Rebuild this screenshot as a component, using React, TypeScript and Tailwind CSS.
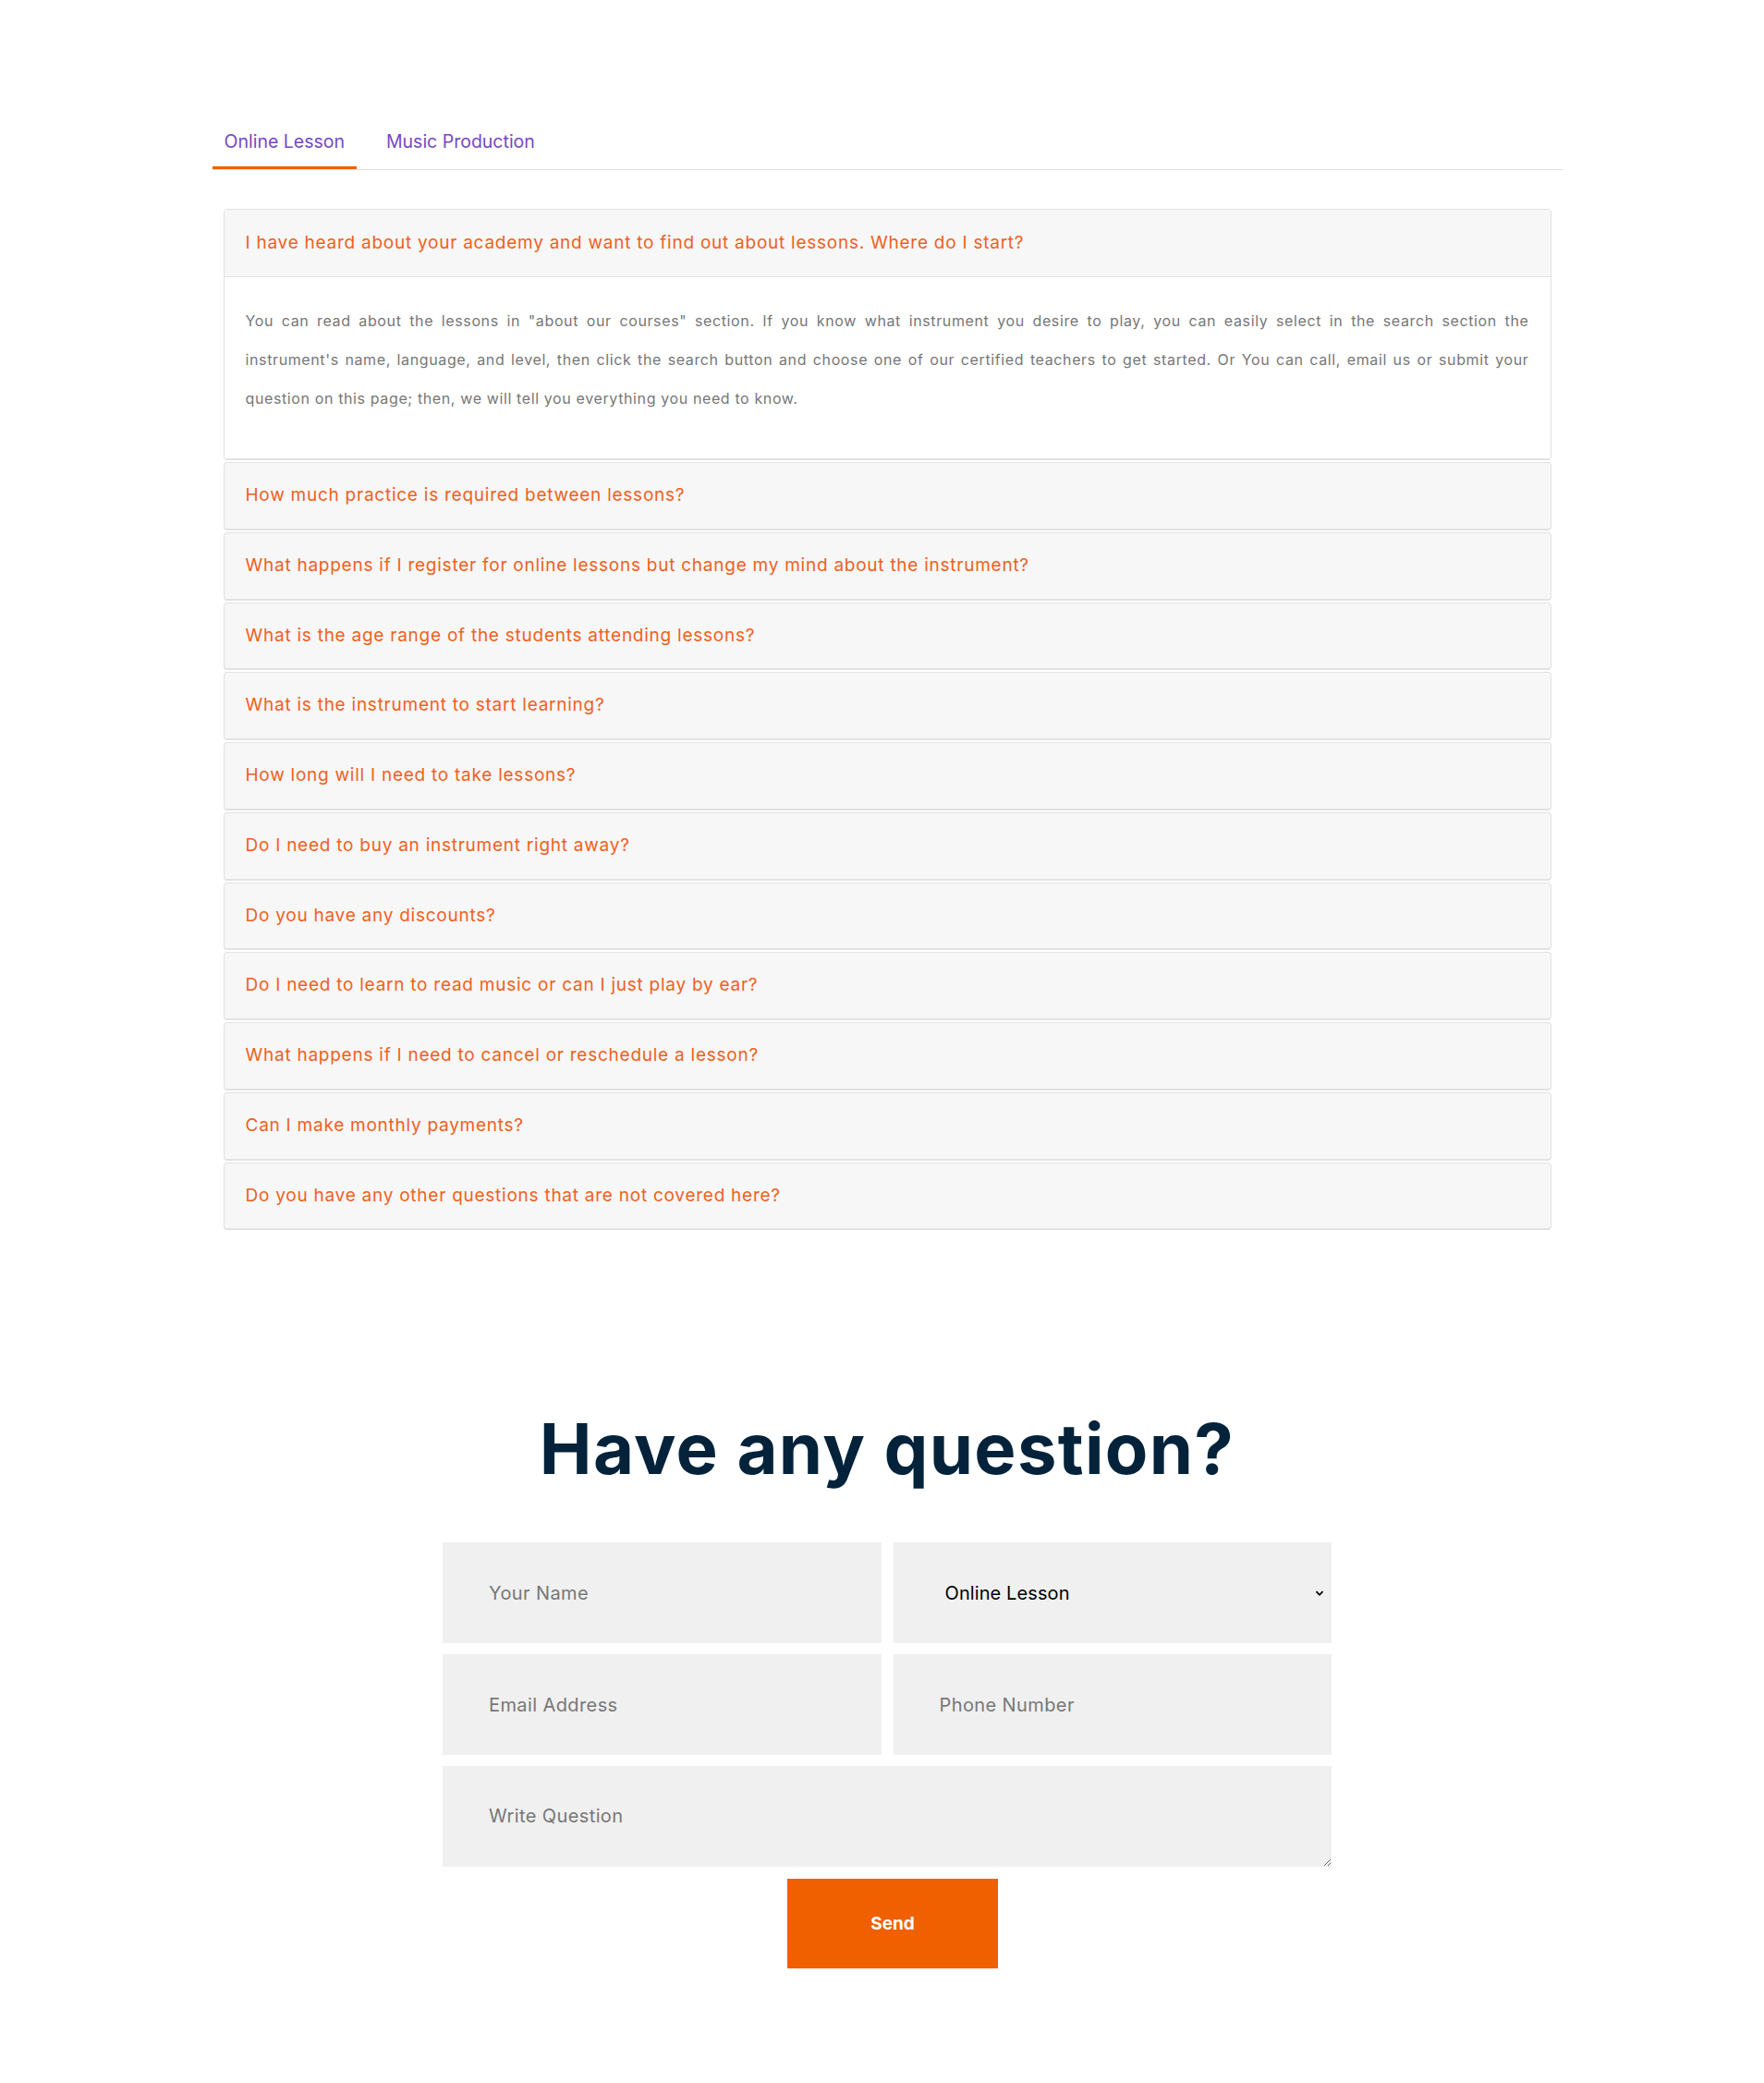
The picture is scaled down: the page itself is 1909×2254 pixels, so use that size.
import { useState } from "react";

const questions = [
  "How much practice is required between lessons?",
  "What happens if I register for online lessons but change my mind about the instrument?",
  "What is the age range of the students attending lessons?",
  "What is the instrument to start learning?",
  "How long will I need to take lessons?",
  "Do I need to buy an instrument right away?",
  "Do you have any discounts?",
  "Do I need to learn to read music or can I just play by ear?",
  "What happens if I need to cancel or reschedule a lesson?",
  "Can I make monthly payments?",
  "Do you have any other questions that are not covered here?",
];

const font = "font-['Inter','Liberation_Sans',sans-serif]";

function Tabs() {
  const [tab, setTab] = useState(0);
  const tabs = ["Online Lesson", "Music Production"];
  return (
    <div className="flex border-b border-[#dedede]">
      {tabs.map((t, i) => (
        <button
          key={t}
          onClick={() => setTab(i)}
          className={
            "px-[13px] pt-[11px] pb-[12px] text-[19.5px] leading-[30px] text-[#7648c4] border-b-[3px] " +
            (i === 0 ? "" : "ml-[19px] ") +
            (tab === i ? "border-[#f06000]" : "border-transparent")
          }
        >
          {t}
        </button>
      ))}
    </div>
  );
}

function Accordion() {
  const head = "px-[23px] text-[19px] tracking-[0.75px] text-[#f1601c]";
  return (
    <div className="mt-[42px] px-[12px]">
      <div className="mb-[2px] rounded-[4px] border border-b-2 border-[#e2e2e2]">
        <div className={"flex h-[73px] items-center border-b border-[#e2e2e2] bg-[#f7f7f7] " + head}>
          I have heard about your academy and want to find out about lessons. Where do I start?
        </div>
        <div className="bg-white px-[23px] pt-[26px] pb-[44px]">
          <p className="text-justify text-[16px] leading-[42px] tracking-[0.62px] text-[#777777]">
            You can read about the lessons in "about our courses" section. If you know what instrument you desire
            to play, you can easily select in the search section the instrument's name, language, and level, then
            click the search button and choose one of our certified teachers to get started. Or You can call, email
            us or submit your question on this page; then, we will tell you everything you need to know.
          </p>
        </div>
      </div>
      {questions.map((q) => (
        <div
          key={q}
          className={"mb-[2px] flex h-[73.75px] items-center rounded-[4px] border border-b-2 border-[#e2e2e2] bg-[#f7f7f7] " + head}
        >
          {q}
        </div>
      ))}
    </div>
  );
}

function QuestionForm() {
  const field =
    "h-[109px] w-full bg-[#f0f0f0] pl-[50px] pr-4 text-[20px] tracking-[0.4px] text-black outline-none placeholder:text-[#777777]";
  return (
    <form className="mx-auto mt-[59px] w-[962px]" onSubmit={(e) => e.preventDefault()}>
      <div className="grid grid-cols-2 gap-x-[13px] gap-y-[12px]">
        <input className={field} placeholder="Your Name" />
        <div className="relative">
          <select className={field + " appearance-none !pl-[56px] !tracking-[0.1px]"} defaultValue="Online Lesson">
            <option>Online Lesson</option>
            <option>Music Production</option>
          </select>
          <svg
            className="pointer-events-none absolute right-[8px] top-1/2 -translate-y-1/2"
            width="10"
            height="10"
            viewBox="0 0 10 10"
          >
            <path d="M1.5 3.2 L5 6.8 L8.5 3.2" fill="none" stroke="#000" strokeWidth="1.8" />
          </svg>
        </div>
        <input className={field} placeholder="Email Address" />
        <input className={field} placeholder="Phone Number" />
        <textarea
          className="col-span-2 h-[109px] w-full bg-[#f0f0f0] pl-[50px] pt-[39px] text-[20px] leading-[30px] tracking-[0.4px] outline-none placeholder:text-[#777777]"
          placeholder="Write Question"
        />
      </div>
      <div className="mt-[13px] flex justify-center pl-[12px]">
        <button className="h-[97px] w-[228px] bg-[#f06000] text-[19px] font-bold text-white">Send</button>
      </div>
    </form>
  );
}

export default function App() {
  return (
    <div className={"min-h-[2254px] bg-white pl-[11px] " + font}>
      <section className="mx-auto w-[1461px] pt-[127px]">
        <Tabs />
        <Accordion />
      </section>
      <section className="pt-[191px]">
        <h2 className="text-center text-[76px] font-bold leading-[86px] tracking-[1.3px] text-[#04233b]">
          Have any question?
        </h2>
        <QuestionForm />
      </section>
    </div>
  );
}
